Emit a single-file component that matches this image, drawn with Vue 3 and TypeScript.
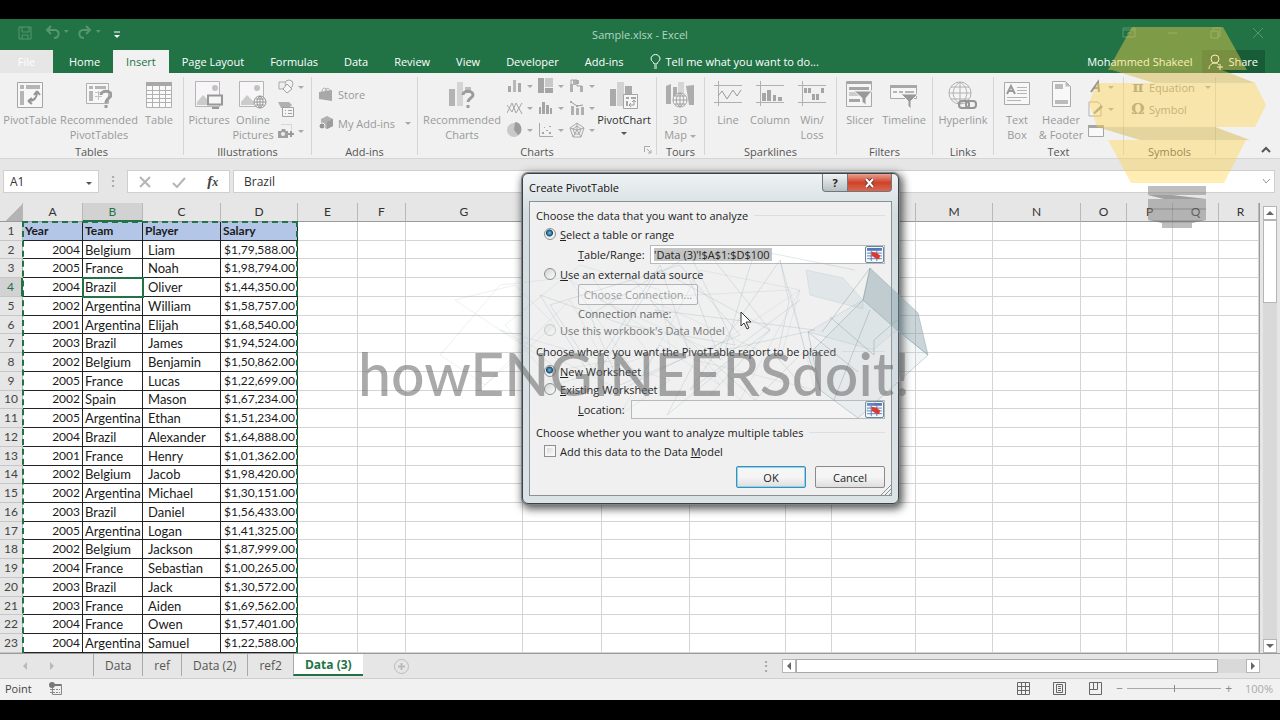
<script setup lang="ts">
import { ref } from 'vue'

type HeaderState = 'plain' | 'selected'
interface Column { letter: string; width: number; state: HeaderState }
interface RibbonButton { id: string; icon: string; lines: string[] }

const menuTabs: string[] = ['Home', 'Insert', 'Page Layout', 'Formulas', 'Data', 'Review', 'View', 'Developer', 'Add-ins']
const activeTab = ref<string>('Insert')

const tableButtons: RibbonButton[] = [
  { id: 'w60', icon: 'pivot', lines: ['PivotTable'] },
  { id: 'w78', icon: 'recpivot', lines: ['Recommended', 'PivotTables'] },
  { id: 'w42', icon: 'table', lines: ['Table'] },
]
const pictureButtons: RibbonButton[] = [
  { id: 'w46', icon: 'pictures', lines: ['Pictures'] },
  { id: 'w42', icon: 'online', lines: ['Online', 'Pictures'] },
]
const sparkButtons: RibbonButton[] = [
  { id: 'w42', icon: 'sline', lines: ['Line'] },
  { id: 'w42', icon: 'scolumn', lines: ['Column'] },
  { id: 'w42', icon: 'swin', lines: ['Win/', 'Loss'] },
]
const filterButtons: RibbonButton[] = [
  { id: 'w42', icon: 'slicer', lines: ['Slicer'] },
  { id: 'w46', icon: 'timeline', lines: ['Timeline'] },
]
const textButtons: RibbonButton[] = [
  { id: 'w42', icon: 'textbox', lines: ['Text', 'Box'] },
  { id: 'w46', icon: 'header', lines: ['Header', '& Footer'] },
]
const chartIcons: string[] = ['bar', 'tree', 'fall', 'zig', 'histo', 'combo', 'pie', 'scatter', 'radar']

const columns: Column[] = [
  { letter: 'A', width: 60, state: 'plain' },
  { letter: 'B', width: 60, state: 'selected' },
  { letter: 'C', width: 78, state: 'plain' },
  { letter: 'D', width: 77, state: 'plain' },
  { letter: 'E', width: 60, state: 'plain' },
  { letter: 'F', width: 48, state: 'plain' },
  { letter: 'G', width: 117, state: 'plain' },
  { letter: 'H', width: 79, state: 'plain' },
  { letter: 'I', width: 88, state: 'plain' },
  { letter: 'J', width: 96, state: 'plain' },
  { letter: 'K', width: 46, state: 'plain' },
  { letter: 'L', width: 84, state: 'plain' },
  { letter: 'M', width: 77, state: 'plain' },
  { letter: 'N', width: 88, state: 'plain' },
  { letter: 'O', width: 46, state: 'plain' },
  { letter: 'P', width: 46, state: 'plain' },
  { letter: 'Q', width: 46, state: 'plain' },
  { letter: 'R', width: 0, state: 'plain' },
]

const records: [string, string, string, string][] = [
  ['Year', 'Team', 'Player', 'Salary'],
  ['2004', 'Belgium', 'Liam', '$1,79,588.00'],
  ['2005', 'France', 'Noah', '$1,98,794.00'],
  ['2004', 'Brazil', 'Oliver', '$1,44,350.00'],
  ['2002', 'Argentina', 'William', '$1,58,757.00'],
  ['2001', 'Argentina', 'Elijah', '$1,68,540.00'],
  ['2003', 'Brazil', 'James', '$1,94,524.00'],
  ['2002', 'Belgium', 'Benjamin', '$1,50,862.00'],
  ['2005', 'France', 'Lucas', '$1,22,699.00'],
  ['2002', 'Spain', 'Mason', '$1,67,234.00'],
  ['2005', 'Argentina', 'Ethan', '$1,51,234.00'],
  ['2004', 'Brazil', 'Alexander', '$1,64,888.00'],
  ['2001', 'France', 'Henry', '$1,01,362.00'],
  ['2002', 'Belgium', 'Jacob', '$1,98,420.00'],
  ['2002', 'Argentina', 'Michael', '$1,30,151.00'],
  ['2003', 'Brazil', 'Daniel', '$1,56,433.00'],
  ['2005', 'Argentina', 'Logan', '$1,41,325.00'],
  ['2002', 'Belgium', 'Jackson', '$1,87,999.00'],
  ['2004', 'France', 'Sebastian', '$1,00,265.00'],
  ['2003', 'Brazil', 'Jack', '$1,30,572.00'],
  ['2003', 'France', 'Aiden', '$1,69,562.00'],
  ['2004', 'France', 'Owen', '$1,57,401.00'],
  ['2004', 'Argentina', 'Samuel', '$1,22,588.00'],
]

const sheets: string[] = ['Data', 'ref', 'Data (2)', 'ref2', 'Data (3)']
const activeSheet = ref<string>('Data (3)')

const source = ref<string>('range')
const target = ref<string>('new')
const range = ref<string>("'Data (3)'!$A$1:$D$100")
const place = ref<string>('')
const addToModel = ref<boolean>(false)
const cellName = ref<string>('A1')
const formula = ref<string>('Brazil')
const zoom = ref<number>(50)
</script>

<template>
  <div class="screen">
    <svg class="defs" aria-hidden="true">
      <symbol id="i-pivot" viewBox="0 0 26 26"><path d="M.5.5h25v25H.5z" fill="#f7f7f7" stroke="#a5a5a5" /><path d="M3 3h4v4H3zM9 3h14v4H9zM3 9h4v14H3z" fill="#b5b5b5" /><path d="M11 19c6 0 9-3 9-9M20 9l-3 4M20 9l3 4M11 19l4-3M11 19l4 3" fill="none" stroke="#959595" stroke-width="2" /></symbol>
      <symbol id="i-recpivot" viewBox="0 0 26 26"><path d="M.5 1.500h22v20H.5z" fill="#f7f7f7" stroke="#b0b0b0" /><path d="M3 4h4v3H3zM9 4h11v3H9zM3 9h4v10H3z" fill="#b5b5b5" /><path d="M9 10.500h9M9 14.500h7M12.500 9v9" stroke="#c4c4c4" /><path d="M15 13c0-5 10-5 10 0 0 3-5 3-5 8M20 23v3" fill="none" stroke="#9b9b9b" stroke-width="3" /></symbol>
      <symbol id="i-table" viewBox="0 0 26 26"><path d="M.5.5h25v25H.5z" fill="#fafafa" stroke="#b0b0b0" /><path d="M0 0h26v4H0z" fill="#a8a8a8" /><path d="M0 8.500h26M0 12.500h26M0 16.500h26M0 20.500h26M6.500 4v22M13.500 4v22M19.500 4v22" stroke="#b0b0b0" /></symbol>
      <symbol id="i-pictures" viewBox="0 0 28 28"><path d="M.5.5h24v25H.5z" fill="#f8f5f8" stroke="#b5b5b5" /><path d="M2 24V21l6-7 7 7v3z" fill="#cbcbcb" /><circle cx="20" cy="7" r="3" fill="#c2c2c2" /><path d="M13 14.500h14v9H13z" fill="#f5f5f5" stroke="#979797" stroke-width="2" /><path d="M17 27h7" stroke="#979797" stroke-width="2" /></symbol>
      <symbol id="i-online" viewBox="0 0 28 28"><path d="M.5.5h24v25H.5z" fill="#f8f5f8" stroke="#b5b5b5" /><path d="M2 24V21l6-7 7 7v3z" fill="#cbcbcb" /><circle cx="18" cy="7" r="3" fill="#c2c2c2" /><circle cx="21" cy="21" r="6" fill="#f5f5f5" stroke="#979797" /><path d="M15 21h12M21 15v12M16.500 18h9M16.500 24h9M21 15c-4 3-4 9 0 12M21 15c4 3 4 9 0 12" fill="none" stroke="#979797" /></symbol>
      <symbol id="i-shapes" viewBox="0 0 16 16"><path d="M1 3h8v7H1z" fill="#eee" stroke="#a9a9a9" /><circle cx="11" cy="5" r="4" fill="#f2f2f2" stroke="#a9a9a9" /><path d="M9 5l5 5-5 4-4-4z" fill="#f5f5f5" stroke="#a0a0a0" /></symbol>
      <symbol id="i-smart" viewBox="0 0 16 16"><path d="M0 1h11l3 3-3 3H3z" fill="#b0b0b0" /><path d="M4.500 6.500h11v9h-11z" fill="#f4f4f4" stroke="#a0a0a0" /><path d="M7 9.500h1M10 9.500h4M7 12.500h1M10 12.500h4" stroke="#a0a0a0" /></symbol>
      <symbol id="i-shot" viewBox="0 0 16 16"><path d="M3.500 1.500h10v6" fill="none" stroke="#bbb" stroke-dasharray="1 1" /><path d="M0 8h3l1-2h3l1 2h2v7H0z" fill="#a0a0a0" /><circle cx="5" cy="11" r="2" fill="#eee" /><path d="M13 8v6M10 11h6" stroke="#999" stroke-width="2" /></symbol>
      <symbol id="i-store" viewBox="0 0 16 16"><path d="M1 6l13-2v11L1 13z" fill="#a8a8a8" /><path d="M4 6c0-5 4-5 5-1M7 5c1-4 5-3 5 0" fill="none" stroke="#b0b0b0" /></symbol>
      <symbol id="i-addins" viewBox="0 0 16 16"><path d="M3 4l6-3 6 3v7l-6 3-6-3z" fill="#b0b0b0" /><path d="M9 7l6-3v7l-6 3z" fill="#9c9c9c" /><circle cx="4" cy="11" r="3" fill="#959595" stroke="#f1f1f1" /></symbol>
      <symbol id="i-reccharts" viewBox="0 0 28 28"><path d="M1 8h6v17H1z" fill="#b3b3b3" /><path d="M9 1h6v24H9z" fill="#d4d4d4" /><path d="M17 6h6v6h-6z" fill="#bdbdbd" /><path d="M15 14c0-5 10-5 10 0 0 3-5 3-5 7M20 24v3" fill="none" stroke="#9b9b9b" stroke-width="3" /></symbol>
      <symbol id="i-bar" viewBox="0 0 16 16"><path d="M1 8h3v6H1zM11 5h3v9h-3z" fill="#a8a8a8" /><path d="M6 2h3v12H6z" fill="#b8b8b8" /></symbol>
      <symbol id="i-tree" viewBox="0 0 16 16"><path d="M0 0h6v15H0zM7 10h8v5H7z" fill="#a5a5a5" /><path d="M7 0h8v9H7z" fill="#c8c8c8" /></symbol>
      <symbol id="i-fall" viewBox="0 0 16 16"><path d="M1 6h3v8H1zM4 2h3v5H4zM7 2h3v4H7zM11 8h3v6h-3z" fill="#b0b0b0" /><path d="M2 6V2h6v6h5" fill="none" stroke="#a0a0a0" /></symbol>
      <symbol id="i-zig" viewBox="0 0 16 16"><path d="M0 13L5 3l4 10 6-10M0 5l5 7 4-9 6 11" fill="none" stroke="#a5a5a5" /></symbol>
      <symbol id="i-histo" viewBox="0 0 16 16"><path d="M1 7h2v7H1zM4 2h3v12H4zM8 5h3v9H8zM12 8h2v6h-2z" fill="#a5a5a5" /></symbol>
      <symbol id="i-combo" viewBox="0 0 16 16"><path d="M2 6h3v9H2zM7 8h3v7H7zM12 7h3v8h-3z" fill="#b0b0b0" /><path d="M2 2l6 4 6-1" fill="none" stroke="#999" /><circle cx="2" cy="2" r="1" fill="#999" /><circle cx="8" cy="6" r="1" fill="#999" /></symbol>
      <symbol id="i-pie" viewBox="0 0 16 16"><circle cx="7" cy="8" r="7" fill="#c9c9c9" /><path d="M8 0a7 7 0 0 1 3 13L7 8z" fill="#9d9d9d" /></symbol>
      <symbol id="i-scatter" viewBox="0 0 16 16"><path d="M1.500 1v13.500H15" fill="none" stroke="#a8a8a8" /><path d="M4 10h2v2H4zM6 5h1v1H6zM8 8h2v1H8zM11 4h2v1h-2zM11 10h2v2h-2z" fill="#a8a8a8" /></symbol>
      <symbol id="i-radar" viewBox="0 0 16 16"><path d="M8 1l7 5-3 9H4L1 6zM8 4l4 3-2 5H6L4 7zM8 1v7l7-2M8 8l4 7M8 8l-4 7M8 8L1 6" fill="none" stroke="#a8a8a8" /></symbol>
      <symbol id="i-pivotchart" viewBox="0 0 28 28"><path d="M0 8h6v17H0zM15 5h7v8h-7z" fill="#aaa" /><path d="M7 1h7v24H7z" fill="#d2d2d2" /><path d="M13.500 13.500h14v14h-14z" fill="#f6f6f6" stroke="#a5a5a5" /><path d="M16 16h3v2h-3zM21 16h5v2h-5zM16 20h2v5h-2z" fill="#a5a5a5" /><path d="M20 24h4v-4M22 21l2-2 2 2M21 22l-2 2 2 2" fill="none" stroke="#999" /></symbol>
      <symbol id="i-map" viewBox="0 0 28 28"><path d="M0 5l5-2v20H0zM20 5l8-1v20h-5zM7 6h4v10H7z" fill="#adadad" /><path d="M12 1h6v12h-6z" fill="#d5d5d5" /><circle cx="14" cy="19" r="7" fill="#f5f5f5" stroke="#a0a0a0" /><path d="M7 19h14M14 12v14M9 15h10M9 23h10M14 12c-5 4-5 10 0 14M14 12c5 4 5 10 0 14" fill="none" stroke="#a0a0a0" /></symbol>
      <symbol id="i-sline" viewBox="0 0 28 28"><path d="M0 4.500h28M0 21.500h28M4.500 0v25" stroke="#b0b0b0" /><path d="M4 15l4-5 5 8 6-9 4 6 4-6" fill="none" stroke="#999" /></symbol>
      <symbol id="i-scolumn" viewBox="0 0 28 28"><path d="M0 4.500h28M0 21.500h28M4.500 0v25" stroke="#b0b0b0" /><path d="M6 12h4v8H6zM11 9h4v11h-4zM17 14h3v6h-3zM22 16h4v4h-4z" fill="#a5a5a5" /></symbol>
      <symbol id="i-swin" viewBox="0 0 28 28"><path d="M0 4.500h28M0 21.500h28M4.500 0v25" stroke="#b0b0b0" /><path d="M6 7h3v5H6zM10 7h3v5h-3zM14 13h3v6h-3zM18 13h3v6h-3zM23 7h3v5h-3z" fill="#a5a5a5" /></symbol>
      <symbol id="i-slicer" viewBox="0 0 28 28"><path d="M.5.5h25v25H.5z" fill="#f5f5f5" stroke="#a8a8a8" /><path d="M1 1h24v2H1zM3 6h20v3H3zM3 18h11v3H3z" fill="#a5a5a5" /><path d="M3 11h10v4H3z" fill="#ccc" /><path d="M8 10h18l-6 7v7l-4-3v-4z" fill="#999" stroke="#f1f1f1" /></symbol>
      <symbol id="i-timeline" viewBox="0 0 28 28"><path d="M.5 4.500h26v13H.5z" fill="#f6f6f6" stroke="#a8a8a8" /><path d="M0 4h27v3H0z" fill="#a8a8a8" /><path d="M3 11h4M9 11h4M15 11h9" stroke="#b5b5b5" stroke-width="2" /><path d="M11 13h17l-7 7v8l-3-3v-5z" fill="#999" stroke="#f1f1f1" /></symbol>
      <symbol id="i-link" viewBox="0 0 30 28"><circle cx="12" cy="12" r="11" fill="#f5f5f5" stroke="#b0b0b0" /><path d="M1 12h22M12 1v22M3 6h18M3 18h18M12 1C3 7 3 17 12 23M12 1c9 6 9 16 0 22" fill="none" stroke="#b0b0b0" /><rect x="11" y="20" width="10" height="7" rx="3" fill="none" stroke="#959595" stroke-width="2" /><rect x="18" y="20" width="10" height="7" rx="3" fill="none" stroke="#959595" stroke-width="2" /></symbol>
      <symbol id="i-textbox" viewBox="0 0 28 28"><path d="M1.500 1.500h25v22h-25z" fill="#f7f7f7" stroke="#aaa" /><path d="M4 13L8 5l4 8M6 10h4" fill="none" stroke="#9a9a9a" stroke-width="2" /><path d="M14 6.500h10M14 9.500h10M14 12.500h10M4 16.500h20M4 19.500h14" stroke="#b5b5b5" /></symbol>
      <symbol id="i-header" viewBox="0 0 28 28"><path d="M5.500.5h13l5 5v20h-18z" fill="#f8f8f8" stroke="#aaa" /><path d="M18.500.5v5h5M8 3h8v5H8zM8 19h13v4H8z" fill="#bbb" /></symbol>
      <symbol id="i-wordart" viewBox="0 0 16 16"><path d="M3 13L10 3l1 10M6 9h5" fill="none" stroke="#939393" stroke-width="2" /></symbol>
      <symbol id="i-sign" viewBox="0 0 16 16"><path d="M1 1h9l3 3v11H1z" fill="#f5f5f5" stroke="#b0b0b0" /><path d="M5 12l8-8 2 2-8 7z" fill="#999" /></symbol>
      <symbol id="i-object" viewBox="0 0 16 16"><path d="M.5 2.500h15v11H.5z" fill="#f8f8f8" stroke="#a5a5a5" /><path d="M0 2h16v3H0z" fill="#a5a5a5" /></symbol>
      <symbol id="i-refedit" viewBox="0 0 16 14"><path d="M0 0h16v14H0z" fill="#f7f9ff" /><path d="M0 0h16v3H0z" fill="#5577b8" /><path d="M0 5.500h16M0 8.500h16M0 11.500h16M4.500 3v11M10.500 3v11" stroke="#5577b8" /><path d="M5 4l5 1 4 3-1 4-4-1-4-3z" fill="#dd3a2b" /></symbol>
    </svg>

    <div class="bar-black top"></div>

    <header class="titlebar">
      <div class="quick">
        <button type="button" aria-label="Save"><svg width="16" height="16" viewBox="0 0 16 16"><path d="M2 2h12v12H2zM5 2v5h7V2M5 14v-4h6v4" /></svg></button>
        <button type="button" aria-label="Undo" class="wide"><svg width="24" height="16" viewBox="0 0 24 16"><path d="M6 1L2 5l4 4M2 5h8c5 0 5 8-1 8" stroke-width="2" /><path d="M19 5h5l-3 3z" class="solid" /></svg></button>
        <button type="button" aria-label="Redo" class="wide"><svg width="24" height="16" viewBox="0 0 24 16"><path d="M9 1l4 4-4 4M13 5H6c-5 0-5 8 1 8" stroke-width="2" /><path d="M19 5h5l-3 3z" class="solid" /></svg></button>
        <button type="button" aria-label="Customize" class="bright"><svg width="8" height="10" viewBox="0 0 8 10"><path d="M1 2h6" /><path d="M1 5h6L4 8z" class="solid" /></svg></button>
      </div>
      <h1>Sample.xlsx - Excel</h1>
      <div class="wincontrols">
        <button type="button" aria-label="Ribbon options"><svg width="14" height="12" viewBox="0 0 14 12"><path d="M1 1h12v9H1zM1 3h12M5 7l2-2 2 2" /></svg></button>
        <button type="button" aria-label="Minimize"><svg width="14" height="12" viewBox="0 0 14 12"><path d="M3 6h9" /></svg></button>
        <button type="button" aria-label="Restore"><svg width="14" height="12" viewBox="0 0 14 12"><path d="M3 4h7v7H3zM5 4V1h7v8h-2" /></svg></button>
        <button type="button" aria-label="Close"><svg width="14" height="12" viewBox="0 0 14 12"><path d="M2 1l10 10M12 1L2 11" /></svg></button>
      </div>
    </header>

    <nav class="menubar">
      <button type="button" class="file">File</button>
      <button v-for="tab in menuTabs" :key="tab" type="button" class="tab" :class="{ active: tab === activeTab }" @click="activeTab = tab">{{ tab }}</button>
      <button type="button" class="tell"><svg width="11" height="15" viewBox="0 0 11 15"><path d="M4 10c0-2-3-3-3-5a4 4 0 0 1 9 0c0 2-3 3-3 5zM4 12h3M4 14h3" fill="none" stroke="#fff" /></svg>Tell me what you want to do...</button>
      <span class="account">Mohammed Shakeel</span>
      <button type="button" class="share"><svg width="16" height="16" viewBox="0 0 16 16"><circle cx="7" cy="5" r="4" /><path d="M1 15c0-4 3-6 6-6 2 0 3 1 4 2M12 10v6M9 13h6" /></svg>Share</button>
    </nav>

    <section class="ribbon">
      <div class="group g-tables">
        <div class="body">
          <button v-for="b in tableButtons" :key="b.icon" type="button" class="big" :class="b.id"><svg width="26" height="28"><use :href="'#i-' + b.icon" /></svg><span v-for="l in b.lines" :key="l">{{ l }}</span></button>
        </div>
        <p>Tables</p>
      </div>
      <div class="group g-illus">
        <div class="body">
          <button v-for="b in pictureButtons" :key="b.icon" type="button" class="big" :class="b.id"><svg width="28" height="28"><use :href="'#i-' + b.icon" /></svg><span v-for="l in b.lines" :key="l">{{ l }}</span></button>
          <div class="stack">
            <button type="button" class="small" aria-label="Shapes"><svg width="16" height="16"><use href="#i-shapes" /></svg><i class="caret"></i></button>
            <button type="button" class="small" aria-label="SmartArt"><svg width="16" height="16"><use href="#i-smart" /></svg></button>
            <button type="button" class="small" aria-label="Screenshot"><svg width="16" height="16"><use href="#i-shot" /></svg><i class="caret"></i></button>
          </div>
        </div>
        <p>Illustrations</p>
      </div>
      <div class="group g-addins">
        <div class="body addins">
          <button type="button" class="small"><svg width="16" height="16"><use href="#i-store" /></svg>Store</button>
          <button type="button" class="small"><svg width="16" height="16"><use href="#i-addins" /></svg>My Add-ins<i class="caret far"></i></button>
        </div>
        <p>Add-ins</p>
      </div>
      <div class="group g-charts">
        <div class="body">
          <button type="button" class="big w82"><svg width="28" height="28"><use href="#i-reccharts" /></svg><span>Recommended</span><span>Charts</span></button>
          <div class="chartgrid">
            <button v-for="c in chartIcons" :key="c" type="button" class="small" :aria-label="c + ' chart'"><svg width="16" height="16"><use :href="'#i-' + c" /></svg><i class="caret"></i></button>
          </div>
          <button type="button" class="big live w60"><svg width="28" height="28"><use href="#i-pivotchart" /></svg><span>PivotChart</span><i class="caret dark"></i></button>
        </div>
        <p>Charts</p>
        <svg class="launcher" width="8" height="8" viewBox="0 0 8 8"><path d="M.5 6V.5H6M3 3l4 4M7 4v3H4" fill="none" stroke="#aaa" /></svg>
      </div>
      <div class="group g-tours">
        <div class="body">
          <button type="button" class="big w46"><svg width="28" height="28"><use href="#i-map" /></svg><span>3D</span><span>Map <i class="caret"></i></span></button>
        </div>
        <p>Tours</p>
      </div>
      <div class="group g-spark">
        <div class="body">
          <button v-for="b in sparkButtons" :key="b.icon" type="button" class="big" :class="b.id"><svg width="28" height="28"><use :href="'#i-' + b.icon" /></svg><span v-for="l in b.lines" :key="l">{{ l }}</span></button>
        </div>
        <p>Sparklines</p>
      </div>
      <div class="group g-filters">
        <div class="body">
          <button v-for="b in filterButtons" :key="b.icon" type="button" class="big" :class="b.id"><svg width="28" height="28"><use :href="'#i-' + b.icon" /></svg><span v-for="l in b.lines" :key="l">{{ l }}</span></button>
        </div>
        <p>Filters</p>
      </div>
      <div class="group g-links">
        <div class="body">
          <button type="button" class="big w60"><svg width="30" height="28"><use href="#i-link" /></svg><span>Hyperlink</span></button>
        </div>
        <p>Links</p>
      </div>
      <div class="group g-text">
        <div class="body">
          <button v-for="b in textButtons" :key="b.icon" type="button" class="big" :class="b.id"><svg width="28" height="28"><use :href="'#i-' + b.icon" /></svg><span v-for="l in b.lines" :key="l">{{ l }}</span></button>
          <div class="stack">
            <button type="button" class="small" aria-label="WordArt"><svg width="16" height="16"><use href="#i-wordart" /></svg><i class="caret"></i></button>
            <button type="button" class="small" aria-label="Signature line"><svg width="16" height="16"><use href="#i-sign" /></svg><i class="caret"></i></button>
            <button type="button" class="small" aria-label="Object"><svg width="16" height="16"><use href="#i-object" /></svg></button>
          </div>
        </div>
        <p>Text</p>
      </div>
      <div class="group g-symbols">
        <div class="body stack">
          <button type="button" class="small"><b class="glyph">π</b>Equation<i class="caret far"></i></button>
          <button type="button" class="small"><b class="glyph">Ω</b>Symbol</button>
        </div>
        <p>Symbols</p>
      </div>
      <button type="button" class="collapse" aria-label="Collapse ribbon"><svg width="10" height="7" viewBox="0 0 10 7"><path d="M1 6l4-4 4 4" fill="none" stroke="#555" stroke-width="2" /></svg></button>
    </section>

    <section class="formulabar">
      <div class="namebox"><input v-model="cellName" aria-label="Name box" /><button type="button" aria-label="Names"><i class="caret dark"></i></button></div>
      <span class="dots">⋮</span>
      <div class="fxbox">
        <button type="button" aria-label="Cancel entry"><svg width="12" height="12" viewBox="0 0 12 12"><path d="M1 1l10 10M11 1L1 11" fill="none" stroke="#b5b5b5" stroke-width="2" /></svg></button>
        <button type="button" aria-label="Enter"><svg width="14" height="12" viewBox="0 0 14 12"><path d="M1 7l4 4 8-9" fill="none" stroke="#b5b5b5" stroke-width="2" /></svg></button>
        <button type="button" class="fx" aria-label="Insert function">f<small>x</small></button>
      </div>
      <div class="formula"><input v-model="formula" aria-label="Formula" /><svg width="9" height="7" viewBox="0 0 9 7"><path d="M1 1l3 4 4-4" fill="none" stroke="#999" /></svg></div>
    </section>

    <main class="sheet">
      <div class="gridwrap">
        <table>
          <colgroup>
            <col class="rowhead" />
            <col v-for="c in columns" :key="c.letter" :style="c.width ? { width: c.width + 'px' } : {}" />
          </colgroup>
          <thead>
            <tr>
              <th class="corner"></th>
              <th v-for="c in columns" :key="c.letter" scope="col" :class="c.state">{{ c.letter }}</th>
            </tr>
          </thead>
          <tbody>
            <tr v-for="(r, i) in records" :key="i" :class="{ heading: i === 0 }">
              <th scope="row" :class="{ selected: i === 3 }">{{ i + 1 }}</th>
              <td v-for="(v, j) in r" :key="j" class="filled" :class="['c' + j, { current: i === 3 && j === 1 }]">{{ v }}</td>
              <td v-for="n in 14" :key="'e' + n"></td>
            </tr>
          </tbody>
        </table>
        <div class="ants"></div>
      </div>
      <div class="vscroll">
        <button type="button" aria-label="Scroll up"><i class="tri up"></i></button>
        <div class="thumb"></div>
        <div class="track"></div>
        <button type="button" aria-label="Scroll down"><i class="tri down"></i></button>
      </div>
    </main>

    <div class="sheettabs">
      <div class="arrows"><i class="tri left"></i><i class="tri right"></i></div>
      <button v-for="s in sheets" :key="s" type="button" class="stab" :class="{ active: s === activeSheet }" @click="activeSheet = s">{{ s }}</button>
      <button type="button" class="plus" aria-label="New sheet"><svg width="15" height="15" viewBox="0 0 15 15"><circle cx="7.500" cy="7.500" r="7" fill="none" stroke="#bbb" /><path d="M7.500 4v7M4 7.500h7" stroke="#bbb" stroke-width="2" /></svg></button>
      <span class="dots">⋮</span>
      <div class="hscroll">
        <button type="button" aria-label="Scroll left"><i class="tri left"></i></button>
        <div class="thumb"></div>
        <button type="button" aria-label="Scroll right"><i class="tri right"></i></button>
      </div>
    </div>

    <footer class="status">
      <span>Point</span>
      <svg width="13" height="13" viewBox="0 0 13 13"><path d="M3.500 2.500h9v10h-9z" fill="none" stroke="#888" /><circle cx="3" cy="3" r="3" fill="#777" /><path d="M6 3h6" stroke="#777" stroke-width="2" /><path d="M1 7.500h10M1 10.500h10" stroke="#888" stroke-dasharray="2 1" /></svg>
      <div class="views">
        <button type="button" aria-label="Normal view"><svg width="14" height="13" viewBox="0 0 14 13"><path d="M.5.5h12v12H.5zM.5 4.500h12M.5 8.500h12M4.500.5v12M8.500.5v12" /></svg></button>
        <button type="button" aria-label="Page layout view"><svg width="14" height="13" viewBox="0 0 14 13"><path d="M.5.5h12v12H.5zM3.500 2.500h6v8h-6zM5 4.500h3M5 6.500h3M5 8.500h3" /></svg></button>
        <button type="button" aria-label="Page break view"><svg width="14" height="13" viewBox="0 0 14 13"><path d="M.5.5h12v12H.5zM.5 7.500h8v-7M4.500.5v7" /></svg></button>
      </div>
      <div class="zoomer">
        <button type="button" aria-label="Zoom out">−</button>
        <input v-model="zoom" type="range" min="0" max="100" aria-label="Zoom" />
        <button type="button" aria-label="Zoom in">+</button>
        <span>100%</span>
      </div>
    </footer>
    <div class="bar-black bottom"></div>

    <form class="dialog" role="dialog" aria-label="Create PivotTable" @submit.prevent>
      <div class="caption">
        <h2>Create PivotTable</h2>
        <button type="button" class="help" aria-label="Help">?</button>
        <button type="button" class="close" aria-label="Close"><svg width="11" height="10" viewBox="0 0 11 10"><path d="M2 1l7 8M9 1L2 9" stroke="#6b3a36" stroke-width="4" /><path d="M2 1l7 8M9 1L2 9" stroke="#fff" stroke-width="2" /></svg></button>
      </div>
      <div class="panel">
        <div class="legend">Choose the data that you want to analyze</div>
        <label class="line"><input v-model="source" type="radio" name="source" value="range" /><span><u>S</u>elect a table or range</span></label>
        <div class="field">
          <label for="range"><u>T</u>able/Range:</label>
          <div class="box"><span class="mark"><input id="range" v-model="range" type="text" /></span><button type="button" aria-label="Pick range"><svg width="15" height="13"><use href="#i-refedit" /></svg></button></div>
        </div>
        <label class="line"><input v-model="source" type="radio" name="source" value="external" /><span><u>U</u>se an external data source</span></label>
        <button type="button" class="connect" disabled>Choose Connection...</button>
        <div class="conn">Connection name:</div>
        <label class="line dim"><input v-model="source" type="radio" name="source" value="model" disabled /><span>Use this workbook's Data Model</span></label>
        <div class="legend second">Choose where you want the PivotTable report to be placed</div>
        <label class="line tight"><input v-model="target" type="radio" name="target" value="new" /><span><u>N</u>ew Worksheet</span></label>
        <label class="line tight"><input v-model="target" type="radio" name="target" value="existing" /><span><u>E</u>xisting Worksheet</span></label>
        <div class="field loc">
          <label for="place"><u>L</u>ocation:</label>
          <div class="box"><input id="place" v-model="place" type="text" /><button type="button" aria-label="Pick location"><svg width="15" height="13"><use href="#i-refedit" /></svg></button></div>
        </div>
        <div class="legend third">Choose whether you want to analyze multiple tables</div>
        <label class="line"><input v-model="addToModel" type="checkbox" /><span>Add this data to the Data <u>M</u>odel</span></label>
        <div class="actions"><button type="submit" class="ok">OK</button><button type="button">Cancel</button></div>
        <svg class="grip" width="10" height="10" viewBox="0 0 10 10"><path d="M0 10L10 0M4 10l6-6M8 10l2-2" stroke="#8a9296" /></svg>
      </div>
    </form>

    <svg class="mesh" width="600" height="180" viewBox="0 0 600 180" aria-hidden="true">
      <g fill="none" stroke="#8fa6ad" stroke-opacity=".16">
        <path d="M95 60l60-15 40 40-70 60-45-30 60-70 90-10 60 80-95 30-50-60 75-60 80 25 10 60-110 20z" />
        <path d="M210 40l70 100 60-110 100 20-60 110-90-100 130 60 20-70-90 60-110-50 190-10 25 100-120-30z" />
        <path d="M120 150l90-90 50 90-120-60 170 50-50 35 40-70 60 40-90-110" />
      </g>
      <g fill="none" stroke="#8fa6ad" stroke-opacity=".26">
        <path d="M180 55l50 80 70-110 30 90-80 40-60-90 130-40 60 70-120 50-30-70 100-60 45 90-110-20z" />
        <path d="M240 130l60-100 110 60-80 60 90-130 25 90-50 50-100-90 160 20-90 20 30-100 100 20" />
        <path d="M420 20l9 42-12 55 33 38M350 15l60 75-60 65M330 40l30 80 80-60M333 125l-26 50 60-50" />
      </g>
      <g stroke="#7f99a1" stroke-opacity=".4">
        <path d="M446 30l37 8 20 22v9l-53-14z" fill="#b4c7ce" fill-opacity=".25" stroke-opacity=".15" />
        <path d="M510 28l48 45 10 42-31-25-34-30z" fill="#7f9aa5" fill-opacity=".42" />
        <path d="M503 60l34 30-24 20-65-18z" fill="#b8cbd2" fill-opacity=".2" stroke-opacity=".2" />
        <path d="M503 60l-55 55 12 35 38 28 70-63" fill="#bdced4" fill-opacity=".18" />
        <path d="M510 28l-48 64M510 28l-7 32M470 77l44 38 0-15 23-20M510 70l-36 90M460 150l-12-58 50 40M568 115l-31-25" fill="none" />
      </g>
    </svg>
    <div class="brand" aria-hidden="true">howENGINEERSdoit!</div>

    <svg class="bulb" width="180" height="204" viewBox="0 0 180 204" aria-hidden="true">
      <g fill="#ffd34d" fill-opacity=".42">
        <path d="M44 1h91l24 43H20zM9 57h158l11 22-11 22H9L1 77zM20 114h138l-22 43H43z" />
      </g>
      <path d="M24 44h110l33 13H66zM9 101h118l35 13H52z" fill="#d8b94e" fill-opacity=".5" />
      <path d="M60 160h58v9H60zM60 173h58v9H60zM60 184h58v10H60zM74 197h30v5H74z" fill="#888" fill-opacity=".55" />
      <path d="M60 169h24l34 4H76zM60 182h58v2H60zM60 194h58l-14 3H74z" fill="#707070" fill-opacity=".6" />
    </svg>

    <svg class="pointer" width="12" height="19" viewBox="0 0 12 19" aria-hidden="true"><path d="M1 1v14l3-3 3 6 2-1-3-6h5z" fill="#fff" stroke="#333" /></svg>
  </div>
</template>

<style>
html,
body,
#app {
  margin: 0;
  height: 100%;
  background: #000;
}
</style>

<style scoped>
* { box-sizing: border-box; }
.screen {
  position: relative;
  display: flex;
  flex-direction: column;
  min-height: 100%;
  overflow: hidden;
  font: 11px/15px "Open Sans", "Noto Sans", sans-serif;
  color: #444;
  background: #e6e6e6;
}
button, input { font: inherit; color: inherit; border: 0; padding: 0; background: none; min-width: 0; }
h1, h2, p { margin: 0; font: inherit; }
.defs { position: absolute; width: 0; height: 0; }
.bar-black { background: #000; flex: none; }
.top { height: 19px; }
.bottom { height: 20px; }

.titlebar { display: grid; grid-template-columns: 1fr auto 1fr; align-items: center; height: 31px; background: #217346; color: #b5d6c3; }
.titlebar svg { fill: none; stroke: #58966f; display: block; }
.titlebar .solid { fill: #58966f; stroke: none; }
.titlebar .bright svg { stroke: #fff; }
.titlebar .bright .solid { fill: #fff; }
.quick { display: flex; align-items: center; gap: 12px; padding: 0 0 4px 17px; }
.quick .wide { width: 24px; }
.quick .wide + .wide { margin-left: -4px; }
.quick .bright { margin-top: 4px; }
.wincontrols { display: flex; justify-content: flex-end; gap: 29px; padding: 0 15px 4px 0; }

.menubar { display: flex; height: 23px; background: #217346; color: #fff; }
.file { width: 53px; background: #e6e6e6; color: #fff; }
.tab { padding: 0 13px; white-space: nowrap; }
.file + .tab { margin-left: 3px; }
.tab.active { background: #f1f1f1; color: #217346; }
.tell { display: flex; align-items: center; gap: 5px; margin-left: 13px; white-space: nowrap; }
.account { margin-left: auto; line-height: 23px; }
.share { display: flex; align-items: center; gap: 4px; margin: 0 15px 0 10px; padding: 0 7px 0 6px; background: #185c37; }
.share svg { fill: none; stroke: #fff; }

.ribbon { display: flex; height: 86px; padding-top: 4px; background: #f1f1f1; border-bottom: 1px solid #d5d5d5; color: #999; }
.group { display: flex; flex-direction: column; flex: none; position: relative; height: 78px; border-right: 1px solid #d5d5d5; }
.group p { margin-top: auto; color: #555; text-align: center; line-height: 14px; }
.body { display: flex; height: 68px; padding-top: 4px; flex: none; }
.big { display: flex; flex-direction: column; align-items: center; justify-content: flex-start; flex: none; white-space: nowrap; line-height: 15px; }
.big svg { margin-bottom: 3px; flex: none; }
.big.live { color: #333; }
.live .caret { margin-top: 5px; }
.small { display: flex; align-items: center; gap: 4px; height: 16px; white-space: nowrap; }
.stack { display: flex; flex-direction: column; gap: 6px; }
.w42 { width: 42px; }
.w46 { width: 46px; }
.w60 { width: 60px; }
.w78 { width: 78px; }
.w82 { width: 82px; }
.caret { display: inline-block; border: 3px solid transparent; border-top: 3px solid #aaa; border-bottom: 0; vertical-align: middle; }
.caret.dark { border-top-color: #555; }
.caret.far { margin-left: 6px; }
.g-tables { width: 184px; }
.g-illus { width: 128px; }
.g-illus .body { padding-left: 2px; }
.g-illus .stack { margin: -2px 0 0 4px; }
.g-addins { width: 106px; }
.body.addins { flex-direction: column; gap: 13px; padding: 9px 0 0 6px; }
.g-charts { width: 239px; }
.g-charts .body { padding-left: 3px; }
.chartgrid { display: grid; grid-template-columns: 31px 31px 31px; grid-auto-rows: 16px; row-gap: 6px; margin: -3px 0 0 4px; }
.chartgrid + .big { margin-left: -6px; }
.launcher { position: absolute; right: 4px; bottom: 1px; }
.g-tours { width: 48px; }
.g-spark { width: 132px; }
.g-spark .body { padding-left: 2px; }
.g-filters .body { padding-left: 2px; }
.g-filters { width: 96px; }
.g-links { width: 61px; }
.g-text { width: 130px; }
.g-text .body { padding-left: 2px; }
.g-text .stack { margin: -2px 0 0 4px; }
.g-symbols { width: 92px; }
.g-symbols .body { padding: 2px 0 0 7px; }
.glyph { width: 14px; font: bold 15px/16px "DejaVu Serif", serif; }
.collapse { margin-left: auto; padding: 0 9px 2px 0; align-self: flex-end; }

.formulabar { display: flex; height: 44px; padding: 11px 5px 10px 3px; }
.formulabar input { font-size: 12px; color: #333; flex: 1; }
.namebox { display: flex; width: 96px; padding: 0 6px; background: #fff; border: 1px solid #cfcfcf; }
.dots { width: 28px; text-align: center; font-size: 14px; line-height: 22px; color: #999; }
.fxbox { display: flex; align-items: center; justify-content: space-around; width: 103px; background: #fff; border: 1px solid #cfcfcf; }
.fxbox svg { display: block; }
.fx { font: italic bold 15px/16px "Liberation Serif", serif; color: #444; }
.fx small { font-size: 12px; }
.formula { display: flex; align-items: center; flex: 1; margin-left: 3px; padding: 0 3px 0 10px; background: #fff; border: 1px solid #cfcfcf; }

.sheet { display: flex; flex: 1; min-height: 450px; border-bottom: 1px solid #9b9b9b; }
.gridwrap { position: relative; flex: 1; display: grid; }
table { width: 100%; height: 100%; table-layout: fixed; border-collapse: separate; border-spacing: 0; background: #fff; font: 13px/16px Lato, "Open Sans", sans-serif; color: #1a1a1a; border-right: 1px solid #9b9b9b; }
col.rowhead { width: 23px; }
th { padding: 0; font-size: 12px; font-weight: 400; background: #e6e6e6; color: #444; border-right: 1px solid #b8b8b8; border-bottom: 1px solid #c6c6c6; }
thead th { height: 19px; border-bottom: 1px solid #9b9b9b; color: #333; }
thead th:last-child { padding-left: 4px; }
th.selected { background: #d2d2d2; color: #217346; }
thead th.selected { border-bottom: 2px solid #217346; }
tbody th.selected { border-right: 2px solid #217346; }
.corner { background: linear-gradient(135deg, #e6e6e6 60%, #b4b4b4 60%); }
td { padding: 0; height: 18px; overflow: hidden; white-space: nowrap; border-right: 1px solid #d4d4d4; border-bottom: 1px solid #d4d4d4; }
td.filled { border-color: #222; }
.c0 { text-align: right; padding-right: 2px; font-size: 12px; }
.c1 { padding-left: 2px; }
.c2 { padding-left: 5px; }
.c3 { text-align: right; padding-right: 2px; font-size: 12px; }
.heading td { font-size: 12px; font-weight: 700; text-align: left; padding-left: 2px; }
.heading td.filled { background: #b4c6e7; }
td.current { outline: 2px solid #217346; outline-offset: -1px; }
.ants { position: absolute; left: 22px; top: 18px; bottom: 0; width: 276px; border: 2px dashed #217346; border-bottom: 0; }
.vscroll { display: flex; flex-direction: column; width: 20px; padding: 3px 3px 0 3px; }
.vscroll button, .hscroll button { display: grid; place-items: center; flex: none; width: 14px; height: 14px; background: #fff; border: 1px solid #b5b5b5; }
.vscroll .thumb { height: 83px; background: #fff; border: 1px solid #b5b5b5; }
.track { flex: 1; background: #d9d9d9; }
.tri { width: 0; height: 0; border: 4px solid transparent; }
.tri.up { border-bottom-color: #666; border-top: 0; }
.tri.down { border-top-color: #666; border-bottom: 0; }
.tri.left { border-right-color: #666; border-left: 0; }
.tri.right { border-left-color: #666; border-right: 0; }

.sheettabs { display: flex; height: 25px; padding-right: 20px; border-bottom: 1px solid #cfcfcf; font-size: 12px; }
.arrows { display: flex; align-items: center; gap: 23px; width: 93px; padding-left: 23px; opacity: .35; }
.stab { height: 22px; padding: 0 11px; border-left: 1px solid #aaa; color: #555; }
.stab.active { background: #fff; color: #217346; font-weight: 700; border-bottom: 2px solid #217346; }
.plus { margin-left: 31px; height: 24px; }
.plus svg { display: block; }
.sheettabs .dots { margin-left: auto; line-height: 24px; width: 20px; margin-right: 6px; }
.hscroll { display: flex; align-self: center; width: 38%; max-width: 478px; background: #d9d9d9; }
.hscroll .thumb { flex: 1; margin-right: 28px; background: #fff; border: 1px solid #a9a9a9; }

.status { display: flex; align-items: center; height: 21px; padding: 0 7px 2px 5px; background: #f1f1f1; }
.status > svg { margin-left: 17px; }
.views { display: flex; gap: 22px; margin-left: auto; }
.views svg { display: block; fill: none; stroke: #666; }
.zoomer { display: flex; align-items: center; gap: 4px; margin-left: 13px; color: #888; font-size: 12px; }
.zoomer span { margin-left: 9px; font-size: 11px; color: #aaa; }
.zoomer input { appearance: none; width: 94px; height: 9px; margin: 0; background: linear-gradient(#aaa, #aaa) center / 100% 1px no-repeat; }
.zoomer input::-webkit-slider-thumb { appearance: none; width: 1px; height: 7px; background: #888; }

.dialog {
  position: absolute;
  left: 522px;
  top: 173px;
  width: 377px;
  margin: 0;
  padding: 0 6px 7px;
  border: 1px solid #3c4347;
  border-radius: 6px;
  background: linear-gradient(#eef2f4, #d3dcdf 40px, #dbe3e6);
  box-shadow: 0 0 0 1px #7d858a, 2px 3px 9px 2px rgba(0, 0, 0, .65);
  color: #222;
}
.caption { display: flex; height: 27px; }
.caption h2 { flex: 1; line-height: 27px; color: #111; }
.caption button { height: 18px; border: 1px solid #6f777b; border-top: 0; }
.help { width: 26px; border-radius: 0 0 0 4px; background: linear-gradient(#f1f3f4, #b8bfc3); font-weight: 700; }
.close { width: 45px; margin-left: -1px; border-radius: 0 0 4px 0; background: linear-gradient(#e9a193, #cf4329 50%, #d8674f); }
.close svg { display: block; margin: auto; }
.panel { position: relative; padding: 4px 6px 7px; border: 1px solid #8a9296; background: #f0f0f0; }
.legend { display: flex; align-items: center; gap: 6px; height: 18px; white-space: nowrap; }
.legend::after { content: ""; flex: 1; height: 1px; background: #dcdfe1; }
.second { margin-top: 4px; }
.third { margin-top: 4px; }
.line { display: flex; align-items: center; gap: 4px; height: 20px; padding-left: 8px; }
.line.tight { height: 18px; }
.second + .line.tight { margin-top: 2px; }
.line.dim { height: 16px; color: #777; }
.line.dim input { opacity: .4; }
.line input { appearance: none; width: 12px; height: 12px; margin: 0; border: 1px solid #8e8f8f; background: linear-gradient(135deg, #d0d3d6, #fdfdfd); }
.line input[type="radio"] { border-radius: 50%; }
.line input[type="radio"]:checked { background: radial-gradient(circle at 45% 40%, #6cc4e8 0, #17527e 3px, #16405f 3px, #f0f0f0 4px); }
.line input[type="checkbox"] { box-shadow: inset 0 0 0 2px #f6f6f6; }
.field { display: flex; align-items: center; height: 20px; padding-left: 42px; }
.field label { width: 72px; }
.field.loc { margin-top: 1px; }
.field.loc label { width: 53px; }
.box { display: flex; align-items: center; flex: 1; height: 19px; padding-left: 3px; border: 1px solid #b5babd; background: #fff; }
.field.loc .box { background: #f4f4f4; }
.mark { flex: 1; display: flex; }
.mark input { width: 118px; height: 13px; background: #c4c4c4; }
.box > input { flex: 1; }
.box button { width: 19px; height: 17px; border: 1px solid #6b8599; border-radius: 2px; background: #f5f8fa; }
.box svg { display: block; margin: auto; }
.connect { display: block; width: 120px; height: 21px; margin-left: 42px; border: 1px solid #b0b5b8; border-radius: 2px; background: #f4f4f4; color: #9a9a9a; }
.conn { height: 17px; padding: 1px 0 0 42px; color: #666; }
.actions { display: flex; justify-content: flex-end; gap: 9px; margin-top: 5px; }
.actions button { width: 70px; height: 22px; border: 1px solid #8a8a8a; border-radius: 2px; background: linear-gradient(#f5f5f5 50%, #dedede); }
.actions .ok { border-color: #3c8fb5; box-shadow: inset 0 0 0 1px #8fd3ee; }
.grip { position: absolute; right: 0; bottom: 0; }

.mesh { position: absolute; left: 360px; top: 240px; pointer-events: none; }
.brand { position: absolute; left: 358px; top: 339px; font: 500 59px/70px Lato, sans-serif; color: rgba(100, 100, 100, .55); pointer-events: none; white-space: nowrap; }
.bulb { position: absolute; left: 1088px; top: 26px; pointer-events: none; }
.pointer { position: absolute; left: 740px; top: 311px; pointer-events: none; }
</style>
